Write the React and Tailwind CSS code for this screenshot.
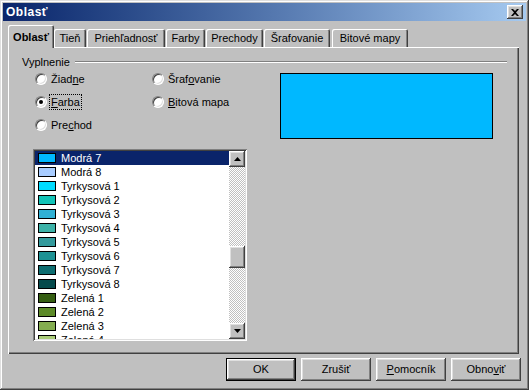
import React from 'react';

const FONT = { fontFamily: '"Liberation Sans", Arial, sans-serif' };

const colors = [
  { name: 'Modrá 7', color: '#00b8ff' },
  { name: 'Modrá 8', color: '#a8ccff' },
  { name: 'Tyrkysová 1', color: '#00dcff' },
  { name: 'Tyrkysová 2', color: '#12c4b8' },
  { name: 'Tyrkysová 3', color: '#30b0d4' },
  { name: 'Tyrkysová 4', color: '#3cb2a8' },
  { name: 'Tyrkysová 5', color: '#339a9c' },
  { name: 'Tyrkysová 6', color: '#1d9294' },
  { name: 'Tyrkysová 7', color: '#0d6d70' },
  { name: 'Tyrkysová 8', color: '#054a4c' },
  { name: 'Zelená 1', color: '#355e12' },
  { name: 'Zelená 2', color: '#5c8a28' },
  { name: 'Zelená 3', color: '#84ad50' },
  { name: 'Zelená 4', color: '#a9cc78' },
];

const tabs = [
  { label: 'Tieň', w: 'w-[32px]', ml: 'ml-0' },
  { label: 'Priehľadnosť', w: 'w-[78px]', ml: 'ml-[1px]' },
  { label: 'Farby', w: 'w-[39px]', ml: 'ml-[1px]' },
  { label: 'Prechody', w: 'w-[57px]', ml: 'ml-[1px]' },
  { label: 'Šrafovanie', w: 'w-[66px]', ml: 'ml-[1px]' },
  { label: 'Bitové mapy', w: 'w-[76px]', ml: 'ml-[2px]' },
];

// 3D klasické okraje (Win2000)
const raised = 'shadow-[inset_-1px_-1px_0_#404040,inset_1px_1px_0_#ffffff,inset_-2px_-2px_0_#808080,inset_2px_2px_0_#dfdfdf]';
const sunken = 'shadow-[inset_1px_1px_0_#808080,inset_-1px_-1px_0_#ffffff,inset_2px_2px_0_#404040,inset_-2px_-2px_0_#dfdfdf]';

const Radio = ({ checked, children }) => (
  <div className="flex items-center h-[14px]">
    <div className="w-[12px] h-[12px] rounded-full bg-white border border-t-[#808080] border-l-[#808080] border-r-white border-b-white shadow-[inset_1px_1px_0_#404040,inset_-1px_-1px_0_#dfdfdf] flex items-center justify-center shrink-0">
      {checked && <div className="w-[4px] h-[4px] rounded-full bg-black" />}
    </div>
    <div className="ml-[4px] text-[11px] text-black leading-none">{children}</div>
  </div>
);

const Arrow = ({ up }) => (
  <svg width="7" height="4" viewBox="0 0 7 4">
    {up ? <polygon points="3.5,0 7,4 0,4" fill="#000" /> : <polygon points="0,0 7,0 3.5,4" fill="#000" />}
  </svg>
);

const Button = ({ children, isDefault }) => (
  <div className={`w-[70px] h-[23px] ${isDefault ? 'border border-black' : ''}`}>
    <div className={`w-full h-full bg-[#c0c0c0] ${raised} flex items-center justify-center text-[11px] text-black`}>
      {children}
    </div>
  </div>
);

export default function App() {
  return (
    <div style={FONT} className="w-[529px] h-[390px] bg-[#c0c0c0] p-[3px] flex flex-col shadow-[inset_-1px_-1px_0_#404040,inset_1px_1px_0_#dfdfdf,inset_-2px_-2px_0_#808080,inset_2px_2px_0_#ffffff] overflow-hidden">
      {/* titulok */}
      <div className="h-[18px] bg-gradient-to-r from-[#0a246a] to-[#a6caf0] flex items-center justify-between pl-[3px] pr-[3px]">
        <span className="text-white font-bold text-[12px] leading-none tracking-[0.5px]">Oblasť</span>
        <div className={`w-[16px] h-[14px] bg-[#c0c0c0] ${raised} flex items-center justify-center`}>
          <svg width="8" height="7" viewBox="0 0 8 7">
            <path d="M0 0 L2 0 L4 2 L6 0 L8 0 L5 3.5 L8 7 L6 7 L4 5 L2 7 L0 7 L3 3.5 Z" fill="#000" />
          </svg>
        </div>
      </div>

      {/* záložky */}
      <div className="relative z-10 h-[26px] flex items-end pl-[5px]">
        <div className="w-[46px] h-[23px] -mb-[1px] bg-[#c0c0c0] rounded-t-[2px] shadow-[inset_1px_1px_0_#ffffff,inset_-1px_0_0_#404040,inset_-2px_0_0_#808080] flex items-start justify-center pt-[7px]">
          <span className="text-[11px] font-bold text-black leading-none">Oblasť</span>
        </div>
        {tabs.map(t => (
          <div key={t.label} className={`${t.w} ${t.ml} h-[18px] bg-[#c0c0c0] rounded-t-[2px] shadow-[inset_1px_1px_0_#ffffff,inset_-1px_0_0_#404040,inset_-2px_0_0_#808080] flex items-center justify-center`}>
            <span className="text-[11px] text-black leading-none">{t.label}</span>
          </div>
        ))}
      </div>

      {/* panel */}
      <div className="ml-[5px] w-[511px] h-[307px] bg-[#c0c0c0] shadow-[inset_1px_1px_0_#ffffff,inset_-1px_-1px_0_#404040,inset_-2px_-2px_0_#808080] flex flex-col pt-[8px]">
        <div className="h-[14px] flex items-center pl-[14px] pr-[12px]">
          <span className="text-[11px] text-black leading-none">Vyplnenie</span>
          <div className="flex-1 ml-[5px] h-[2px] border-t border-t-[#808080] border-b border-b-white" />
        </div>

        <div className="flex items-start mt-[3px] pl-[27px]">
          <div className="w-[245px] flex flex-col gap-[9px]">
            <div className="flex">
              <div className="w-[117px]"><Radio>Žiad<u>n</u>e</Radio></div>
              <Radio>Šraf<u>o</u>vanie</Radio>
            </div>
            <div className="flex">
              <div className="w-[117px]">
                <Radio checked>
                  <span className="border border-dotted border-black px-[1px] py-[1px] -ml-[2px]"><u>F</u>arba</span>
                </Radio>
              </div>
              <Radio><u>B</u>itová mapa</Radio>
            </div>
            <div className="flex">
              <Radio>Pre<u>c</u>hod</Radio>
            </div>
          </div>
          <div className="mt-[1px] w-[213px] h-[66px] bg-[#00b8ff] border border-black" />
        </div>

        {/* zoznam farieb */}
        <div className={`mt-[10px] ml-[25px] w-[214px] h-[192px] bg-white ${sunken} p-[2px] flex`}>
          <div className="flex-1 overflow-hidden">
            {colors.map((c, i) => (
              <div key={c.name} className={`h-[14px] flex items-center ${i === 0 ? 'bg-[#0a246a] text-white' : 'text-black'}`}>
                <div className="ml-[3px] w-[18px] h-[10px] border border-black shrink-0" style={{ backgroundColor: c.color }} />
                <span className="ml-[5px] text-[11px] leading-none">{c.name}</span>
              </div>
            ))}
          </div>
          <div className="w-[16px] flex flex-col">
            <div className={`h-[16px] bg-[#c0c0c0] ${raised} flex items-center justify-center`}><Arrow up /></div>
            <div className="h-[79px] bg-[repeating-conic-gradient(#c0c0c0_0%_25%,#ffffff_0%_50%)] bg-size-[2px_2px]" />
            <div className={`h-[22px] bg-[#c0c0c0] ${raised}`} />
            <div className="flex-1 bg-[repeating-conic-gradient(#c0c0c0_0%_25%,#ffffff_0%_50%)] bg-size-[2px_2px]" />
            <div className={`h-[16px] bg-[#c0c0c0] ${raised} flex items-center justify-center`}><Arrow /></div>
          </div>
        </div>
      </div>

      {/* tlačidlá */}
      <div className="mt-[4px] flex justify-end gap-[5px] pr-[5px]">
        <Button isDefault>OK</Button>
        <Button>Zrušiť</Button>
        <Button><u>P</u>omocník</Button>
        <Button>Obno<u>v</u>iť</Button>
      </div>
    </div>
  );
}
